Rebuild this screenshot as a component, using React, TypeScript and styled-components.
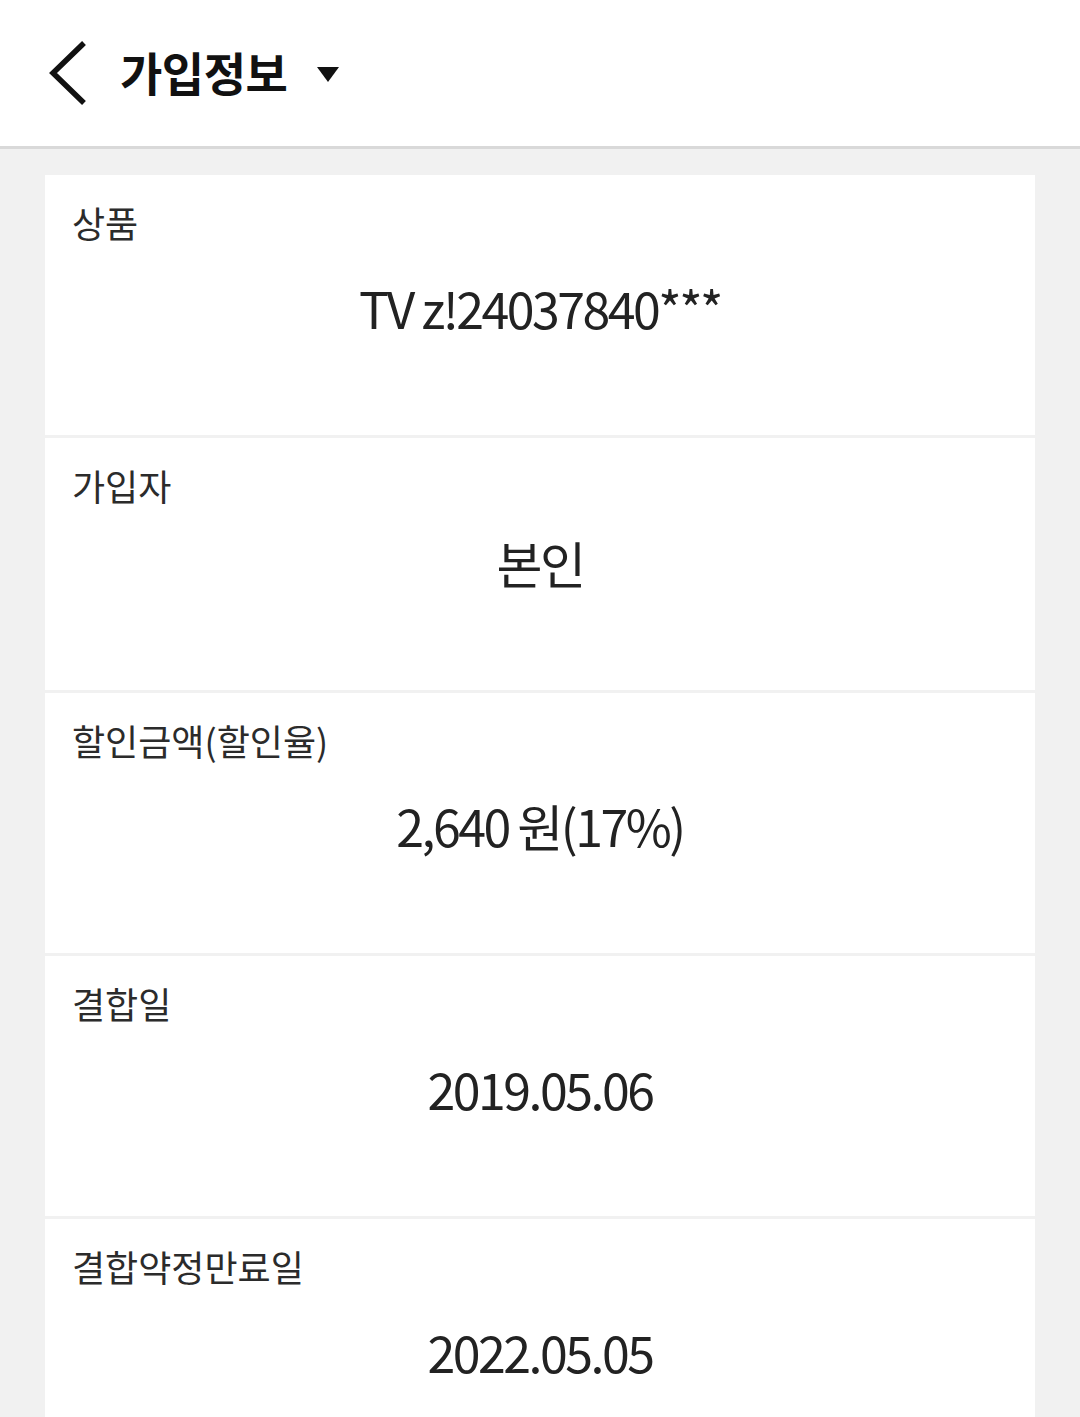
import React from 'react'
import styled, { createGlobalStyle } from 'styled-components'

const GlobalStyle = createGlobalStyle`
  html, body {
    margin: 0;
    padding: 0;
    background: #f1f1f1;
    font-family: "Noto Sans CJK KR", "Noto Sans", sans-serif;
  }
  #root {
    min-height: 1417px;
  }
`;

const Header = styled.header`
  height: 146px;
  display: flex;
  align-items: center;
  background: #ffffff;
  border-bottom: 3px solid #d9d9d9;
  padding-left: 45px;
  box-sizing: content-box;
`;

const BackButton = styled.button`
  width: 44px;
  height: 64px;
  padding: 0;
  border: none;
  background: none;
  display: flex;
  align-items: center;
  justify-content: center;
  margin-right: 31px;
`;

const Title = styled.h1`
  margin: 0 30px 0 0;
  font-size: 46px;
  font-weight: 700;
  letter-spacing: -0.5px;
  color: #111;
  line-height: 1;
  padding-bottom: 4px;
`;

const Caret = styled.span`
  width: 0;
  height: 0;
  border-left: 11px solid transparent;
  border-right: 11px solid transparent;
  border-top: 15px solid #111;
  margin-top: 2px;
`;

const Content = styled.main`
  padding: 26px 45px 0;
`;

const List = styled.div`
  display: flex;
  flex-direction: column;
  gap: 3px;
`;

const Row = styled.section<{ $h: number }>`
  height: ${p => p.$h}px;
  background: #ffffff;
  padding: 24px 27px 0;
  box-sizing: border-box;
`;

const Label = styled.div`
  font-size: 36px;
  line-height: 46px;
  letter-spacing: 0;
  color: #2b2b2b;
`;

const Value = styled.div<{ $mt: number }>`
  margin-top: ${p => p.$mt}px;
  text-align: center;
  font-size: 50px;
  line-height: 60px;
  letter-spacing: -2.5px;
  color: #222;
`;

const items = [
  { label: '상품', value: 'TV z!24037840***', h: 260, mt: 32 },
  { label: '가입자', value: '본인', h: 252, mt: 24 },
  { label: '할인금액(할인율)', value: '2,640 원(17%)', h: 260, mt: 32 },
  { label: '결합일', value: '2019.05.06', h: 260, mt: 32 },
  { label: '결합약정만료일', value: '2022.05.05', h: 260, mt: 32 },
];

const App = () => {
  return (
    <>
      <GlobalStyle />
      <Header>
        <BackButton aria-label="back">
          <svg width="44" height="64" viewBox="0 0 44 64">
            <path d="M37 4 L8 32 L37 60" fill="none" stroke="#111" strokeWidth="5.5" strokeLinecap="square" />
          </svg>
        </BackButton>
        <Title>가입정보</Title>
        <Caret />
      </Header>
      <Content>
        <List>
          {items.map(item => (
            <Row key={item.label} $h={item.h}>
              <Label>{item.label}</Label>
              <Value $mt={item.mt}>{item.value}</Value>
            </Row>
          ))}
        </List>
      </Content>
    </>
  )
}

export default App
